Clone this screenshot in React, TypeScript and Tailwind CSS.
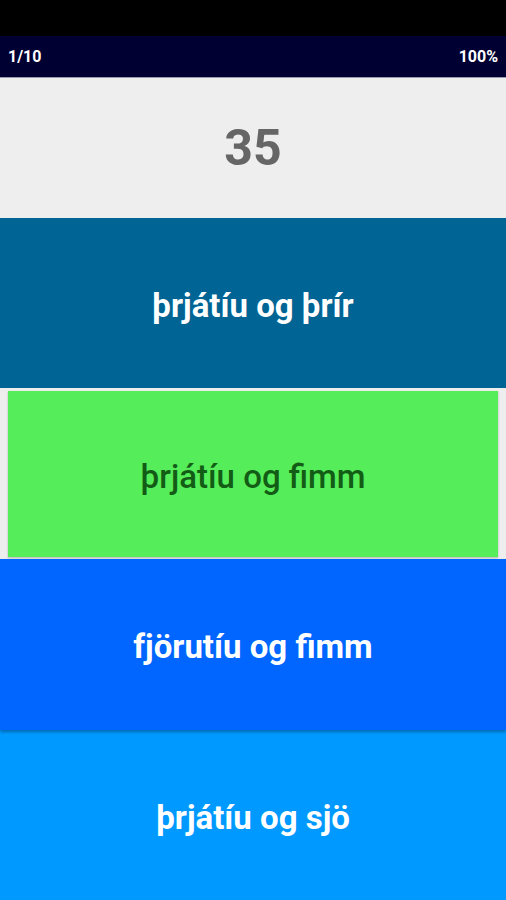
import React from 'react';

const options = [
  { text: 'þrjátíu og þrír', wrap: 'h-[170px] bg-[#006494]', box: 'text-white font-bold' },
  { text: 'þrjátíu og fimm', wrap: 'h-[171px] bg-[#eeeeee] px-[8px] pt-[3px] pb-[2px]', box: 'bg-[#55ee5a] text-[#135c16] font-medium shadow-[0_1px_2px_rgba(0,0,0,0.25)]' },
  { text: 'fjörutíu og fimm', wrap: 'h-[171px] bg-[#0066ff] shadow-[0_2px_3px_rgba(0,0,0,0.3)] z-10', box: 'text-white font-bold' },
  { text: 'þrjátíu og sjö', wrap: 'flex-1 bg-[#0099ff]', box: 'text-white font-bold' },
];

export default function App() {
  return (
    <div className="w-[506px] h-[900px] flex flex-col bg-[#eeeeee] overflow-hidden" style={{ fontFamily: 'Roboto, "Noto Sans", sans-serif' }}>
      <div className="h-[36px] bg-black" />
      <div className="h-[41px] bg-[#000033] flex items-center justify-between px-[8px] text-white text-[16px] font-bold">
        <span>1/10</span>
        <span>100%</span>
      </div>
      <div className="h-[1px] bg-[#9a9ab0]" />
      <div className="h-[140px] flex items-center justify-center text-[#666666] text-[50px] font-bold">35</div>
      {options.map((o, i) => (
        <div key={i} className={`relative flex ${o.wrap}`}>
          <div className={`flex-1 flex items-center justify-center pt-[5px] text-[33px] ${o.box}`}>{o.text}</div>
        </div>
      ))}
    </div>
  );
}
